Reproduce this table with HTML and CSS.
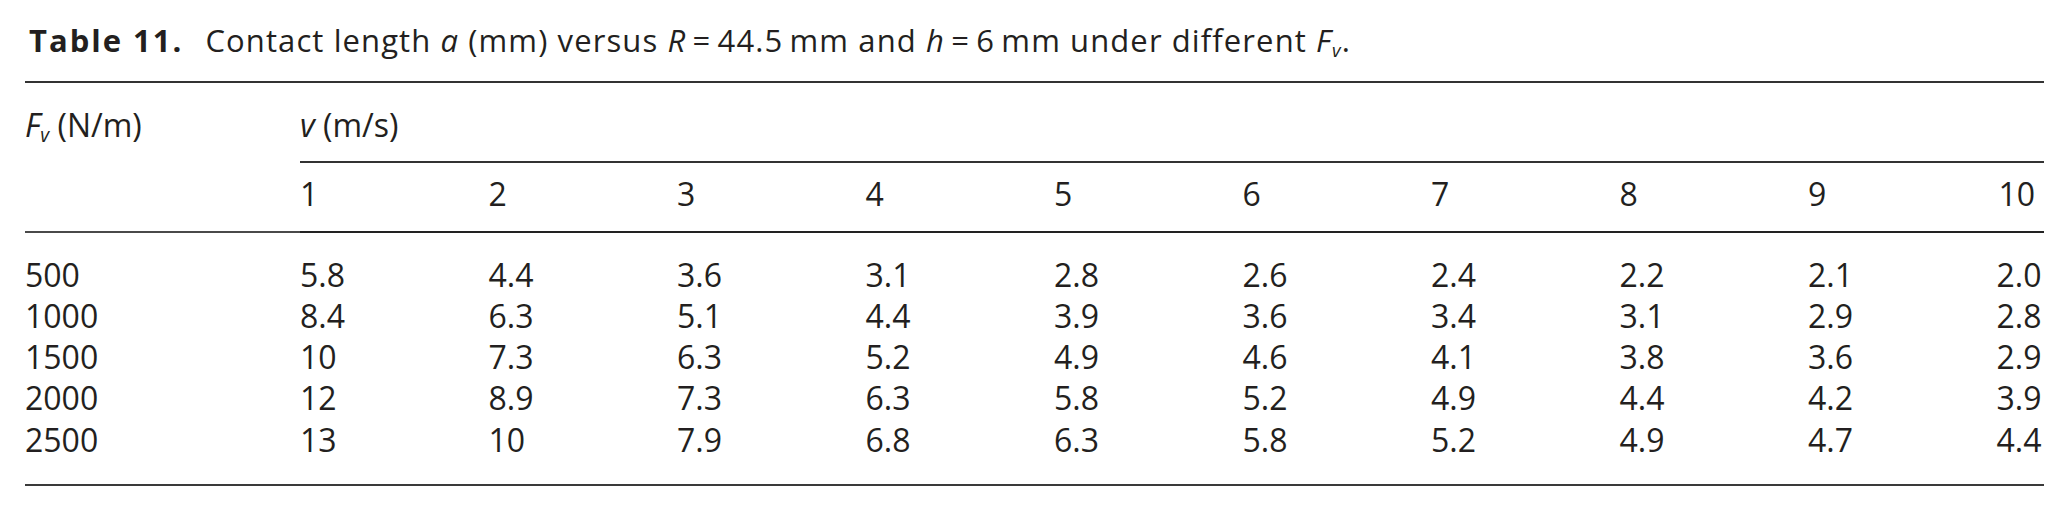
FILE: index.html
```html
<!DOCTYPE html>
<html lang="en">
<head>
<meta charset="utf-8">
<title>Table 11</title>
<link rel="stylesheet" href="styles.css">
</head>
<body>
<div class="page">
  <p class="caption"><span class="label">Table 11.</span>Contact length <i>a</i> (mm) versus <i>R</i>&thinsp;=&thinsp;44.5&thinsp;mm and <i>h</i>&thinsp;=&thinsp;6&thinsp;mm under different <i>F<sub>v</sub></i>.</p>
  <table class="data">
    <colgroup>
      <col class="c-first">
      <col class="c-num"><col class="c-num"><col class="c-num"><col class="c-num"><col class="c-num">
      <col class="c-num"><col class="c-num"><col class="c-num"><col class="c-num">
      <col class="c-last">
    </colgroup>
    <thead>
      <tr class="h1">
        <th rowspan="2" class="stub"><i>F<sub>v</sub></i> (N/m)</th>
        <th colspan="10" class="span"><i>v</i> (m/s)</th>
      </tr>
      <tr class="h2">
        <th>1</th><th>2</th><th>3</th><th>4</th><th>5</th><th>6</th><th>7</th><th>8</th><th>9</th><th class="last">10</th>
      </tr>
    </thead>
    <tbody>
      <tr class="first"><td>500</td><td>5.8</td><td>4.4</td><td>3.6</td><td>3.1</td><td>2.8</td><td>2.6</td><td>2.4</td><td>2.2</td><td>2.1</td><td class="last">2.0</td></tr>
      <tr><td>1000</td><td>8.4</td><td>6.3</td><td>5.1</td><td>4.4</td><td>3.9</td><td>3.6</td><td>3.4</td><td>3.1</td><td>2.9</td><td class="last">2.8</td></tr>
      <tr><td>1500</td><td>10</td><td>7.3</td><td>6.3</td><td>5.2</td><td>4.9</td><td>4.6</td><td>4.1</td><td>3.8</td><td>3.6</td><td class="last">2.9</td></tr>
      <tr><td>2000</td><td>12</td><td>8.9</td><td>7.3</td><td>6.3</td><td>5.8</td><td>5.2</td><td>4.9</td><td>4.4</td><td>4.2</td><td class="last">3.9</td></tr>
      <tr class="end"><td>2500</td><td>13</td><td>10</td><td>7.9</td><td>6.8</td><td>6.3</td><td>5.8</td><td>5.2</td><td>4.9</td><td>4.7</td><td class="last">4.4</td></tr>
    </tbody>
  </table>
</div>
</body>
</html>
```

FILE: styles.css
```css
html, body {
  margin: 0;
  padding: 0;
  background: #ffffff;
}

.page {
  padding: 22px 0 0 25px;
  width: 2019px;
  font-family: "Open Sans", "Lato", sans-serif;
  color: #231f20;
}

.caption {
  margin: 0;
  font-size: 31px;
  line-height: 36px;
  height: 36px;
  padding-left: 4px;
  white-space: nowrap;
  letter-spacing: 1.1px;
}

.caption .label {
  font-weight: 700;
  margin-right: 22px;
  letter-spacing: 2px;
}

i {
  font-style: italic;
}

sub {
  font-size: 0.6em;
  vertical-align: -0.25em;
  line-height: 0;
}

.data {
  margin-top: 23px;
  width: 2019px;
  border-collapse: collapse;
  table-layout: fixed;
  font-size: 32px;
  line-height: 41.25px;
  border-top: 2px solid #333333;
  border-bottom: 2px solid #3a3a3a;
}

.c-first { width: 275px; }
.c-num { width: 188.5px; }
.c-last { width: 47.5px; }

.data th,
.data td {
  padding: 0;
  text-align: left;
  font-weight: 400;
  white-space: nowrap;
  vertical-align: top;
}

.data .last {
  text-align: right;
  padding-right: 9px;
}

.h1 th {
  padding-top: 21px;
  padding-bottom: 16px;
}

.h1 th.stub {
  border-bottom: 2px solid #4a4a4a;
}

.h1 th.span {
  border-bottom: 2px solid #333333;
}

.h2 th {
  padding-top: 10px;
  padding-bottom: 16px;
  border-bottom: 2px solid #222222;
}

.first td {
  padding-top: 21px;
}

.end td {
  padding-bottom: 24px;
}
```
